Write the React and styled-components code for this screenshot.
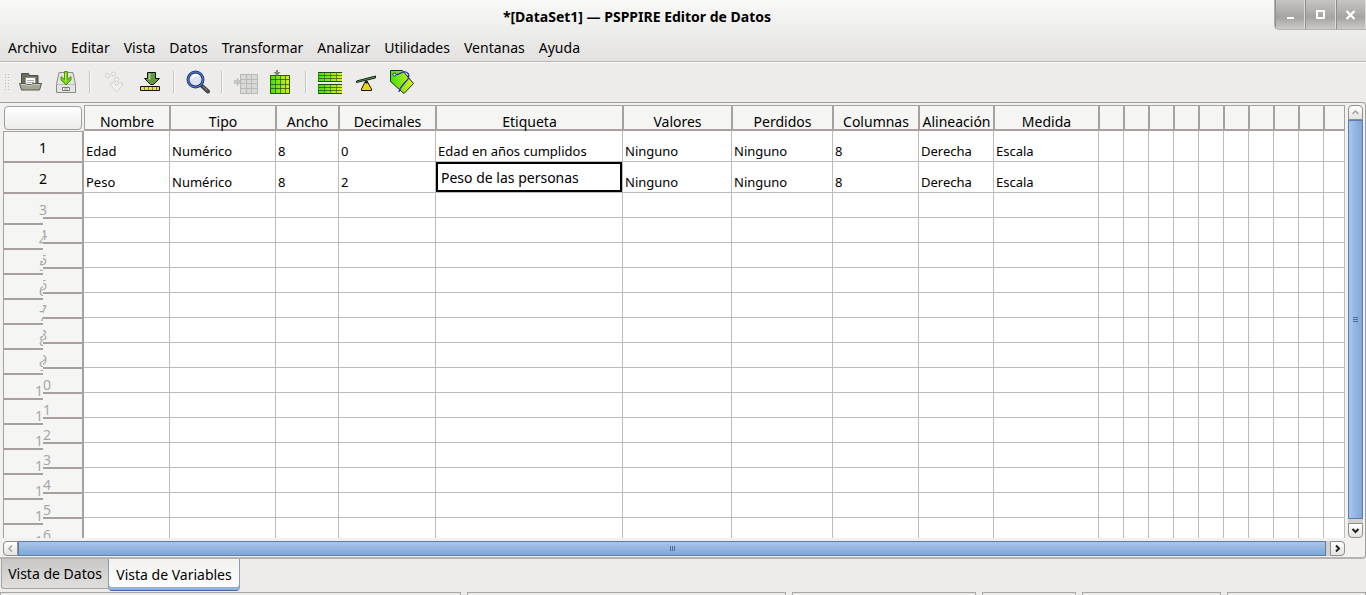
import React from "react";
import styled, { createGlobalStyle, css } from "styled-components";

const LINE = "#a6a19f";
const GRID = "#bcbcbc";

const GlobalStyle = createGlobalStyle`
  *, *::before, *::after { box-sizing: border-box; }
  body { margin: 0; background: #edeceb; }
  body, button, input, table {
    font-family: "Noto Sans", "Open Sans", sans-serif;
    font-size: 14px;
    line-height: 20px;
    color: #000;
  }
  button { border: 0; padding: 0; background: none; }
`;

const Window = styled.div`
  display: flex;
  flex-direction: column;
  height: 100vh;
  overflow: hidden;
`;

const Top = styled.header`
  flex: none;
  background: linear-gradient(#f9f9f7, #e2e1df);
  border-bottom: 1px solid #b9b7b5;
`;

const TitleBar = styled.div`
  display: grid;
  grid-template-columns: 1fr 92px;
  height: 34px;
`;

const Title = styled.h1`
  margin: 0;
  padding-top: 7px;
  font-size: 14px;
  line-height: 20px;
  font-weight: 700;
  text-align: center;
`;

const Controls = styled.div`
  display: flex;
  height: 30px;
  border: 1px solid #b4b2b0;
  border-width: 0 0 1px 1px;
  border-bottom-left-radius: 5px;
  overflow: hidden;
  background: linear-gradient(#c6c5c3, #a5a4a2 60%, #cbcac8);
`;

const Control = styled.button`
  flex: 1;
  display: grid;
  place-items: center;
  border-left: 1px solid #8f8d8b;
  border-right: 1px solid #dddcda;
`;

const Menu = styled.nav`
  display: flex;
  height: 27px;
  padding-left: 1px;
`;

const MenuButton = styled.button`
  flex: none;
  padding: 4px 7px 3px;
  white-space: nowrap;
`;

const Tools = styled.div`
  flex: none;
  display: flex;
  align-items: center;
  height: 40px;
  padding: 0 0 1px 4px;
  border-top: 1px solid #fafafa;
`;

const Grip = styled.span`
  width: 8px;
  height: 18px;
  background: radial-gradient(circle, #bbb 1px, transparent 1px) 0 0 / 3px 3px;
  clip-path: inset(0 2px 0 0);
`;

const Tool = styled.button`
  display: grid;
  place-items: center;
  width: 36px;
  height: 36px;
`;

const Divider = styled.span`
  width: 12px;
  height: 22px;
  padding-left: 5px;
  &::before {
    content: "";
    display: block;
    width: 2px;
    height: 22px;
    background: #c4c2c0;
    border-right: 1px solid #fafafa;
  }
`;

const Frame = styled.main`
  flex: 1;
  min-height: 0;
  display: grid;
  grid-template-columns: minmax(0, 1fr) 15px;
  grid-template-rows: minmax(0, 1fr) 15px;
  gap: 3px;
  padding: 2px 2px 1px 3px;
  border: 1px solid #a09e9c;
  border-width: 1px 1px 2px 0;
  border-bottom-color: #b5b3b1;
  border-radius: 0 4px 4px 0;
  background: #f2f1f0;
`;

const Sheet = styled.div`
  overflow: hidden;
  background: #fff;
`;

const Table = styled.table`
  width: 100%;
  table-layout: fixed;
  border-collapse: separate;
  border-spacing: 0;
`;

const HeadCol = styled.col`
  width: 81px;
  background: #f5f5f3;
`;

const Col = styled.col`
  width: ${(p) => p.$w};
`;

const HeadCell = styled.th`
  height: 26px;
  padding: 8px 0 0;
  font-weight: 400;
  line-height: 15px;
  text-align: center;
  white-space: nowrap;
  background: #f5f5f3;
  border: 1px solid ${LINE};
  border-bottom-width: 2px;
`;

const Corner = styled.td`
  height: 26px;
  padding: 1px;
  background: #f2f1f0;
`;

const CornerButton = styled.button`
  display: block;
  width: 78px;
  height: 24px;
  border: 1px solid #a19f9d;
  border-radius: 4px;
  background: linear-gradient(#fff, #ececeb);
`;

const RowHead = styled.th`
  padding: 0;
  font-weight: 400;
  vertical-align: top;
  border-left: 1px solid ${LINE};
  border-right: 2px solid ${LINE};
`;

const RowNumber = styled.div`
  height: 31px;
  padding-top: 6px;
  text-align: center;
  border: 1px solid ${LINE};
  border-width: 1px 0;
`;

const Halves = styled.div`
  display: grid;
  grid-template-columns: 39px 39px;
  height: 25px;
  line-height: 14px;
  color: #a9a7a5;
`;

const LeftHalf = styled.div`
  height: 25px;
  overflow-x: clip;
  overflow-y: visible;
  text-align: right;
  border-top: ${(p) => (p.$first ? 1 : 0)}px solid ${LINE};
  &::before {
    content: "";
    display: block;
    height: 7px;
    border-bottom: ${(p) => (p.$first ? 0 : 2)}px solid ${LINE};
  }
`;

const RightHalf = styled.div`
  height: 25px;
  overflow-x: ${(p) => (p.$first ? "visible" : "clip")};
  overflow-y: visible;
  text-align: left;
  border: 1px solid ${LINE};
  border-width: 1px 0;
`;

const Digit = styled.span`
  display: block;
  padding-top: 9px;
  margin: 0 ${(p) => (p.$single ? -4 : 0)}px;
`;

const Cell = styled.td`
  height: ${(p) => (p.$filled ? 31 : 25)}px;
  padding: ${(p) => (p.$editing ? "0" : "10px 0 0 2px")};
  font-size: 13px;
  line-height: 20px;
  vertical-align: top;
  white-space: nowrap;
  border-right: 1px solid ${GRID};
  border-bottom: 1px solid ${GRID};
`;

const CellInput = styled.input`
  display: block;
  width: 100%;
  height: 30px;
  padding: 0 3px;
  border: 2px solid #000;
  outline: 0;
  background: #fff;
`;

const Bar = styled.div`
  display: flex;
  flex-direction: ${(p) => (p.$vertical ? "column" : "row")};
  border-radius: 4px;
  background: #d3d1cf;
  overflow: hidden;
`;

const Arrow = styled.button`
  flex: none;
  display: grid;
  place-items: center;
  width: 15px;
  height: 15px;
  border: 1px solid #918f8d;
  border-radius: ${(p) => p.$round};
  background: linear-gradient(#fff, #e4e3e1);
`;

const Thumb = styled.div`
  flex: 1;
  display: grid;
  place-items: center;
  margin: ${(p) => (p.$vertical ? "0 0 4px" : "0 4px 0 0")};
  border: 1px solid #5b7dac;
  background: linear-gradient(${(p) => (p.$vertical ? "90deg" : "180deg")}, #a9c5ea, #80a6da);
`;

const Tabs = styled.div`
  flex: none;
  display: flex;
  align-items: flex-start;
  height: 33px;
  padding-left: 1px;
`;

const Tab = styled.button`
  white-space: nowrap;
  ${(p) =>
    p.$active
      ? css`
          width: 132px;
          height: 32px;
          background: linear-gradient(#f2f1f0, #fff);
          border: 1px solid #8d9bb0;
          border-top: 0;
          border-bottom: 1px solid #44699c;
          border-radius: 0 0 4px 4px;
          box-shadow: inset 0 -3px #8fb2e2;
        `
      : css`
          width: 107px;
          height: 30px;
          background: linear-gradient(#c9c7c5, #e0dfdd);
          border: 1px solid #a6a4a2;
          border-width: 0 0 1px 1px;
          border-radius: 0 0 0 3px;
        `}
`;

const Status = styled.footer`
  flex: none;
  display: grid;
  grid-template-columns: 461fr 319fr 184fr 94fr 139fr 139fr;
  gap: 6px;
  height: 3px;
`;

const StatusPane = styled.div`
  border: 1px solid #a8a6a4;
  border-bottom: 0;
`;

const Icon = ({ children, size = 24 }) => (
  <svg width={size} height={size} viewBox={`0 0 ${size} ${size}`} aria-hidden="true">
    {children}
  </svg>
);

const OpenIcon = () => (
  <Icon>
    <path d="M3.500 3.500h7l1 2h8.500v12h-16.500z" fill="#6b6c5d" stroke="#4d4e43" />
    <path d="M7.500 7.500h10v9h-10z" fill="#fff" stroke="#8e8f85" />
    <path d="M9 10.500h7M9 12.500h7" stroke="#aaa" />
    <path d="M1.500 13.500h6l1.500 1h4.500l1 -1h9l-2 6.500h-18z" fill="#a3a595" stroke="#595a4e" strokeLinejoin="round" />
    <path d="M2.500 14.500h5l1.500 1h5l1 -1h7" stroke="#c9cabd" fill="none" />
  </Icon>
);

const SaveIcon = () => (
  <Icon>
    <path d="M5 2.500h14l2.500 12v8h-19v-8z" fill="#e4e4e2" stroke="#8b8b89" strokeLinejoin="round" />
    <path d="M3 14.500h18" stroke="#bbb" />
    <path d="M8.500 17.500h7v3h-7z" fill="#fff" stroke="#777" />
    <path d="M10 19h4" stroke="#999" />
    <path d="M10.500 1.500h3v8l3.500 -3v3.500l-5 5l-5 -5v-3.500l3.500 3z" fill="#73d216" stroke="#4e9a06" />
    <path d="M11.700 3v9" stroke="#b5f36d" />
  </Icon>
);

const GotoCaseIcon = () => (
  <Icon>
    <g fill="#f1f0ef" stroke="#d2d0ce">
      <circle cx="5.500" cy="5.500" r="2" />
      <circle cx="11.500" cy="4" r="2" />
      <circle cx="14.500" cy="9.500" r="2.300" />
      <path d="M8.500 13.500l3 -1l3 3l3 -3l3 1v2l-6 6l-6 -6z" />
    </g>
  </Icon>
);

const GotoVariableIcon = () => (
  <Icon>
    <path d="M9.500 2.500h8v6h4l-6 6h-3l-6 -6h3z" fill="#5f9a3f" stroke="#111" />
    <path d="M11.500 3.500v6" stroke="#a8cf8a" strokeWidth="2" />
    <path d="M2.500 16.500h19v4h-19z" fill="#e6e337" stroke="#111" />
    <path d="M6.500 17v3M10.500 17v3M14.500 17v3M18.500 17v3" stroke="#85852c" />
  </Icon>
);

const FindIcon = () => (
  <Icon>
    <path d="M16 16l6 5.500" stroke="#444" strokeWidth="4" strokeLinecap="round" />
    <path d="M17 16.500l4.500 4" stroke="#999" />
    <circle cx="9.500" cy="9.500" r="7.500" fill="#dce3ef" stroke="#223f80" strokeWidth="3" />
    <circle cx="9.500" cy="9.500" r="7.500" fill="none" stroke="#4d73c4" strokeWidth="1.200" />
    <path d="M5.500 9a4.500 4.500 0 0 1 7 -3" fill="none" stroke="#fff" strokeWidth="2" />
  </Icon>
);

const InsertCaseIcon = () => (
  <Icon>
    <path d="M6 4h18v20h-18z" fill="#d9dad8" />
    <path d="M6.500 4v20M12.500 4v20M17.500 4v20M23.500 4v20M6 4.500h18M6 9.500h18M6 13.500h18M6 18.500h18M6 23.500h18" stroke="#b7bab7" />
    <path d="M0 10.500h3v-2.500l4 4l-4 4v-2.500h-3z" fill="#c5c7c4" stroke="#b5b5b3" strokeWidth=".500" />
  </Icon>
);

const InsertVariableIcon = () => (
  <Icon>
    <defs>
      <linearGradient id="lime">
        <stop stopColor="#3fe00b" />
        <stop offset="1" stopColor="#e2f013" />
      </linearGradient>
    </defs>
    <path d="M0 5h20v19h-20z" fill="url(#lime)" />
    <path d="M5.500 5v19M10.500 5v19M15.500 5v19M0 9.500h20M0 14.500h20M0 18.500h20" stroke="#193d09" strokeOpacity=".65" />
    <path d="M.500 5.500h19v18h-19z" fill="none" stroke="#2c5a0c" />
    <path d="M6 0h2v2h2.500l-3.500 4l-3.500 -4h2.500z" fill="#76887a" />
  </Icon>
);

const SplitIcon = () => (
  <Icon>
    <path d="M0 2h24v10h-24zM0 14h24v10h-24z" fill="url(#lime)" />
    <path d="M0 5.500h24M0 8.500h24M0 17.500h24M0 20.500h24" stroke="#172f0a" strokeOpacity=".6" />
    <path d="M0 2.500h24M0 11.500h24M0 14.500h24M0 23.500h24" stroke="#1f4a0a" />
    <path d="M.500 2v10M6.500 2v10M12.500 2v10M18.500 2v10M.500 14v10M6.500 14v10M12.500 14v10M18.500 14v10" stroke="#245a0f" strokeOpacity=".6" />
  </Icon>
);

const WeightIcon = () => (
  <Icon>
    <path d="M2.500 11l19 -5v2l-19 4.500z" fill="#58a765" stroke="#122515" />
    <path d="M11 12h2.500l4 7v1.500h-10v-1.500z" fill="#e6d520" stroke="#111" />
    <circle cx="12.500" cy="12" r="1.500" fill="#111" />
  </Icon>
);

const LabelsIcon = () => (
  <Icon>
    <path d="M.500 .500h12l11 13l-9.500 10l-13.500 -12z" fill="url(#lime)" stroke="#1c2a08" />
    <path d="M9.500 19.500l9 -11" stroke="#738b0b" />
    <path d="M4 4.500c3 1 6 -1 9 -2.500c5 -1 7 3 5 7c-2 3 -8 7 -9 13" fill="none" stroke="#2b2bd2" strokeWidth="1.300" />
    <circle cx="4.500" cy="4.500" r="1.500" fill="#fff" stroke="#2222a0" />
  </Icon>
);

const controls = [
  ["Minimizar", <path d="M2 9h7" stroke="#fff" strokeWidth="2" />],
  ["Maximizar", <path d="M2 2h7v7h-7z" fill="none" stroke="#fff" strokeWidth="2" />],
  ["Cerrar", <path d="M1.500 2l8 8M9.500 2l-8 8" stroke="#fff" strokeWidth="2.300" />],
];

const menus = ["Archivo", "Editar", "Vista", "Datos", "Transformar", "Analizar", "Utilidades", "Ventanas", "Ayuda"];

const toolGroups = [
  [["Abrir", OpenIcon], ["Guardar", SaveIcon]],
  [["Ir al caso", GotoCaseIcon], ["Ir a la variable", GotoVariableIcon]],
  [["Buscar", FindIcon]],
  [["Insertar caso", InsertCaseIcon], ["Insertar variable", InsertVariableIcon]],
  [["Segmentar archivo", SplitIcon], ["Ponderar casos", WeightIcon], ["Etiquetas de valor", LabelsIcon]],
];

const columns = [
  ["Nombre", 86],
  ["Tipo", 106],
  ["Ancho", 63],
  ["Decimales", 97],
  ["Etiqueta", 187],
  ["Valores", 109],
  ["Perdidos", 101],
  ["Columnas", 86],
  ["Alineación", 75],
  ["Medida", 105],
  ...Array.from({ length: 9 }, () => ["", 25]),
  ["", "auto"],
];

const variables = [
  ["Edad", "Numérico", "8", "0", "Edad en años cumplidos", "Ninguno", "Ninguno", "8", "Derecha", "Escala"],
  ["Peso", "Numérico", "8", "2", "Peso de las personas", "Ninguno", "Ninguno", "8", "Derecha", "Escala"],
];

const emptyRows = Array.from({ length: 14 }, (_, i) => i + 3);

const chevrons = {
  up: "M1.500 6l3 -3l3 3",
  down: "M1.500 3l3 3l3 -3",
  left: "M6 1.500l-3 3l3 3",
  right: "M3 1.500l3 3l-3 3",
};

function ArrowButton({ dir, label, round, dim }) {
  return (
    <Arrow $round={round} aria-label={label}>
      <Icon size={9}>
        <path d={chevrons[dir]} fill="none" stroke={dim ? "#a5a3a1" : "#222"} strokeWidth={dim ? 1.5 : 2} />
      </Icon>
    </Arrow>
  );
}

// Rows without a variable have headings whose left half is painted lower than the right half.
function PendingRowHead({ n }) {
  const text = String(n);
  const single = text.length === 1;
  const first = n === 3;
  return (
    <RowHead scope="row">
      <Halves>
        <LeftHalf $first={first}>
          {!first && <Digit $single={single}>{text[0]}</Digit>}
        </LeftHalf>
        <RightHalf $first={first}>
          <Digit $single={single}>{single ? text : text[1]}</Digit>
        </RightHalf>
      </Halves>
    </RowHead>
  );
}

export default function App() {
  return (
    <Window>
      <GlobalStyle />
      <Top>
        <TitleBar>
          <Title>*[DataSet1] — PSPPIRE Editor de Datos</Title>
          <Controls>
            {controls.map(([label, shape]) => (
              <Control key={label} aria-label={label}>
                <Icon size={11}>{shape}</Icon>
              </Control>
            ))}
          </Controls>
        </TitleBar>
        <Menu>
          {menus.map((m) => (
            <MenuButton key={m}>{m}</MenuButton>
          ))}
        </Menu>
      </Top>
      <Tools role="toolbar">
        <Grip />
        {toolGroups.map((group, i) => (
          <React.Fragment key={i}>
            {i > 0 && <Divider />}
            {group.map(([label, Glyph]) => (
              <Tool key={label} aria-label={label}>
                <Glyph />
              </Tool>
            ))}
          </React.Fragment>
        ))}
      </Tools>
      <Frame>
        <Sheet>
          <Table>
            <colgroup>
              <HeadCol />
              {columns.map(([, w], i) => (
                <Col key={i} $w={w === "auto" ? w : `${w}px`} />
              ))}
            </colgroup>
            <thead>
              <tr>
                <Corner>
                  <CornerButton aria-label="Seleccionar todo" />
                </Corner>
                {columns.map(([name], i) => (
                  <HeadCell key={i} scope="col">{name}</HeadCell>
                ))}
              </tr>
            </thead>
            <tbody>
              {variables.map((v, r) => (
                <tr key={v[0]}>
                  <RowHead scope="row">
                    <RowNumber>{r + 1}</RowNumber>
                  </RowHead>
                  {columns.map((_, c) => {
                    const editing = r === 1 && c === 4;
                    return (
                      <Cell key={c} $filled $editing={editing}>
                        {editing ? <CellInput aria-label="Etiqueta" defaultValue={v[c]} /> : v[c]}
                      </Cell>
                    );
                  })}
                </tr>
              ))}
              {emptyRows.map((n) => (
                <tr key={n}>
                  <PendingRowHead n={n} />
                  {columns.map((_, c) => (
                    <Cell key={c} />
                  ))}
                </tr>
              ))}
            </tbody>
          </Table>
        </Sheet>
        <Bar $vertical>
          <ArrowButton dir="up" label="Subir" round="4px 4px 0 0" dim />
          <Thumb $vertical>
            <Icon size={7}>
              <path d="M1 1.500h5M1 3.500h5M1 5.500h5" stroke="#4a6da0" />
            </Icon>
          </Thumb>
          <ArrowButton dir="down" label="Bajar" round="0 0 4px 4px" />
        </Bar>
        <Bar>
          <ArrowButton dir="left" label="Izquierda" round="4px 0 0 4px" dim />
          <Thumb>
            <Icon size={7}>
              <path d="M1.500 1v5M3.500 1v5M5.500 1v5" stroke="#4a6da0" />
            </Icon>
          </Thumb>
          <ArrowButton dir="right" label="Derecha" round="0 4px 4px 0" />
        </Bar>
      </Frame>
      <Tabs role="tablist">
        <Tab role="tab" aria-selected="false">Vista de Datos</Tab>
        <Tab role="tab" aria-selected="true" $active>Vista de Variables</Tab>
      </Tabs>
      <Status>
        {[0, 1, 2, 3, 4, 5].map((i) => (
          <StatusPane key={i} />
        ))}
      </Status>
    </Window>
  );
}
